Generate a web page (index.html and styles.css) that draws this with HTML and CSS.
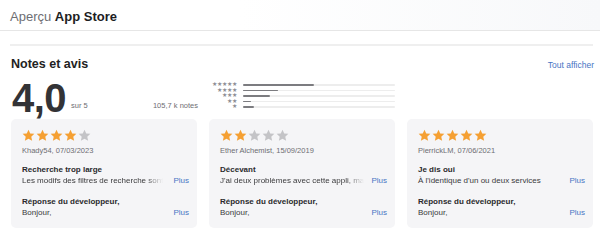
FILE: index.html
```html
<!DOCTYPE html>
<html lang="fr">
<head>
<meta charset="utf-8">
<link rel="stylesheet" href="styles.css">
</head>
<body>
<svg width="0" height="0" class="defs">
  <defs>
    <symbol id="star" viewBox="0 0 24 24">
      <polygon points="12,1.2 15.2,8.1 22.8,8.9 17.1,14.1 18.7,21.7 12,17.8 5.3,21.7 6.9,14.1 1.2,8.9 8.8,8.1"/>
    </symbol>
  </defs>
</svg>
<header class="header"><span class="muted">Aperçu</span>&nbsp;<strong>App Store</strong></header>
<div class="rule"></div>
<main class="section">
  <div class="title-row">
    <h2 class="title">Notes et avis</h2>
    <a class="link all">Tout afficher</a>
  </div>
  <div class="summary">
    <div class="score">
      <span class="big">4,0</span>
      <span class="out">sur 5</span>
      <span class="count">105,7 k notes</span>
    </div>
    <div class="hist">
      <div class="hrow"><span class="hs">★★★★★</span><span class="track"><span class="fill" style="width:47%"></span></span></div>
      <div class="hrow"><span class="hs">★★★★</span><span class="track"><span class="fill" style="width:23%"></span></span></div>
      <div class="hrow"><span class="hs">★★★</span><span class="track"><span class="fill" style="width:18%"></span></span></div>
      <div class="hrow"><span class="hs">★★</span><span class="track"><span class="fill" style="width:5%"></span></span></div>
      <div class="hrow"><span class="hs">★</span><span class="track"><span class="fill" style="width:7%"></span></span></div>
    </div>
  </div>
  <div class="cards">
    <article class="card">
      <div class="stars">
        <svg class="on"><use href="#star"/></svg><svg class="on"><use href="#star"/></svg><svg class="on"><use href="#star"/></svg><svg class="on"><use href="#star"/></svg><svg class="off"><use href="#star"/></svg>
      </div>
      <div class="author">Khady54, 07/03/2023</div>
      <div class="rtitle">Recherche trop large</div>
      <div class="line"><span class="txt"><span class="fade">Les modifs des filtres de recherche sont</span></span><a class="link">Plus</a></div>
      <div class="rtitle dev">Réponse du développeur,</div>
      <div class="line"><span class="txt">Bonjour,</span><a class="link">Plus</a></div>
    </article>
    <article class="card">
      <div class="stars">
        <svg class="on"><use href="#star"/></svg><svg class="on"><use href="#star"/></svg><svg class="off"><use href="#star"/></svg><svg class="off"><use href="#star"/></svg><svg class="off"><use href="#star"/></svg>
      </div>
      <div class="author">Ether Alchemist, 15/09/2019</div>
      <div class="rtitle">Décevant</div>
      <div class="line"><span class="txt"><span class="fade">J'ai deux problèmes avec cette appli, ma</span></span><a class="link">Plus</a></div>
      <div class="rtitle dev">Réponse du développeur,</div>
      <div class="line"><span class="txt">Bonjour,</span><a class="link">Plus</a></div>
    </article>
    <article class="card">
      <div class="stars">
        <svg class="on"><use href="#star"/></svg><svg class="on"><use href="#star"/></svg><svg class="on"><use href="#star"/></svg><svg class="on"><use href="#star"/></svg><svg class="on"><use href="#star"/></svg>
      </div>
      <div class="author">PierrickLM, 07/06/2021</div>
      <div class="rtitle">Je dis oui</div>
      <div class="line"><span class="txt">À l'identique d'un ou deux services</span><a class="link">Plus</a></div>
      <div class="rtitle dev">Réponse du développeur,</div>
      <div class="line"><span class="txt">Bonjour,</span><a class="link">Plus</a></div>
    </article>
  </div>
</main>
</body>
</html>
```
FILE: styles.css
```css
* { box-sizing: border-box; }
html, body { margin: 0; padding: 0; background: #fff; }
body {
  font-family: "Liberation Sans", Arial, sans-serif;
  color: #1d1d1f;
  width: 600px;
  height: 245px;
  overflow: hidden;
}
.defs { position: absolute; }
.header {
  height: 31px;
  padding: 2px 0 0 10px;
  display: flex;
  align-items: center;
  font-size: 13px;
  border-bottom: 1px solid #e6e6e6;
  background: linear-gradient(90deg, #ffffff 0%, #ffffff 40%, #f7f8fa 100%);
}
.header .muted { color: #6e6e73; }
.header strong { color: #1d1d1f; font-weight: 700; }
.rule {
  height: 2px;
  background: #efefef;
  margin: 13px 7px 0 10px;
}
.section { padding: 0 6px 0 11px; }
.title-row {
  display: flex;
  justify-content: space-between;
  align-items: flex-end;
  margin-top: 10px;
  height: 16px;
}
.title { margin: 0; font-size: 12.5px; font-weight: 700; line-height: 16px; color: #222; }
.link { color: #4876c4; font-size: 8.5px; text-decoration: none; }
.all { margin-bottom: 2px; }
.summary { display: flex; margin-top: 10px; height: 32px; }
.score {
  width: 187px;
  display: flex;
  align-items: flex-end;
  padding-left: 1px;
}
.big {
  font-size: 40px;
  font-weight: 700;
  line-height: 32px;
  letter-spacing: -0.5px;
  color: #333336;
  height: 32px;
}
.out { font-size: 7.5px; color: #6e6e73; margin-left: 5px; margin-bottom: 4px; }
.count { font-size: 7.5px; color: #6e6e73; margin-left: auto; margin-bottom: 4px; }
.hist {
  margin-left: 11px;
  width: 187px;
  padding-top: 0;
  display: flex;
  flex-direction: column;
}
.hrow { display: flex; align-items: center; height: 5.6px; }
.hs {
  width: 28px;
  text-align: right;
  font-size: 5.8px;
  line-height: 5.6px;
  color: #8e8e93;
  letter-spacing: 0.1px;
}
.track {
  margin-left: 6px;
  width: 152px;
  height: 1.6px;
  background: #ededed;
  border-radius: 1px;
  display: flex;
}
.fill { height: 100%; background: #7c7c80; border-radius: 1px; }
.cards {
  display: grid;
  grid-template-columns: repeat(3, 186px);
  column-gap: 12px;
  margin-top: 5px;
}
.card {
  background: #f5f5f7;
  border-radius: 5px;
  height: 109px;
  padding: 10px 8px 0 11px;
}
.stars { display: flex; gap: 1px; height: 13px; }
.stars svg { width: 13px; height: 13px; }
.stars .on { fill: #f5a033; }
.stars .off { fill: #c4c4c7; }
.author { font-size: 7.5px; color: #6e6e73; margin-top: 4px; line-height: 10px; }
.rtitle { font-size: 8px; color: #2a2a2c; font-weight: 700; margin-top: 8px; line-height: 11px; }
.rtitle.dev { margin-top: 10px; }
.line { display: flex; align-items: center; line-height: 11px; font-size: 8px; }
.txt { flex: 1; min-width: 0; white-space: nowrap; color: #3a3a3c; }
.fade {
  -webkit-mask-image: linear-gradient(90deg, #000 88%, transparent 100%);
  mask-image: linear-gradient(90deg, #000 88%, transparent 100%);
}
.line .link { margin-left: 4px; font-size: 8px; }
```
